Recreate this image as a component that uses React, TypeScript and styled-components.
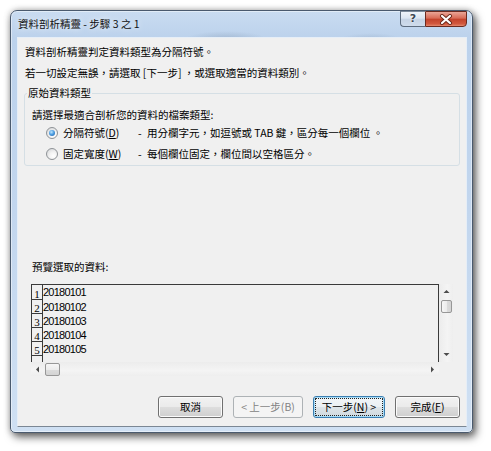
import React from 'react';
import styled, { createGlobalStyle, css } from 'styled-components';

const GlobalStyle = createGlobalStyle`
  html, body { margin: 0; padding: 0; background: #ffffff; }
  body { font-family: "Noto Sans CJK TC", "Noto Sans", sans-serif; color: #000; }
  * { box-sizing: border-box; }
`;

const UI_FONT = `"Noto Sans CJK TC", "Noto Sans", sans-serif`;

const Page = styled.div`
  width: 491px;
  height: 451px;
  padding: 10px 0 0 10px;
  overflow: hidden;
`;

const Frame = styled.div`
  width: 463px;
  height: 423px;
  border: 1px solid #4a5a6e;
  border-radius: 7px 7px 5px 5px;
  background:
    radial-gradient(ellipse 40px 8px at 215px 28px, rgba(120, 140, 165, 0.35), transparent),
    radial-gradient(ellipse 30px 6px at 360px 28px, rgba(120, 140, 165, 0.25), transparent),
    linear-gradient(180deg, #c9dcf1 0px, #bcd2ec 26px, #c2d6ee 200px, #cfe0f3 100%);
  box-shadow: 3px 4px 9px rgba(0, 0, 0, 0.6), 0 0 6px rgba(0, 0, 0, 0.25),
    inset 0 0 0 1px rgba(255, 255, 255, 0.45);
  display: flex;
  flex-direction: column;
`;

const TitleBar = styled.div`
  height: 26px;
  display: flex;
  align-items: flex-start;
  padding: 0 5px 0 7px;
`;

const TitleText = styled.div`
  flex: 1;
  font-family: ${UI_FONT};
  font-size: 10.5px;
  line-height: 14px;
  padding-top: 6px;
  color: #111;
  text-shadow: 0 0 6px rgba(255, 255, 255, 0.9);
  white-space: pre;
`;

const CaptionButton = styled.div<{ $kind: 'help' | 'close' }>`
  height: 16px;
  display: flex;
  align-items: center;
  justify-content: center;
  border: 1px solid #5d6c7e;
  border-top-color: #7d8b9b;
  ${(p) =>
    p.$kind === 'help'
      ? css`
          width: 25px;
          border-right: none;
          border-radius: 0 0 0 4px;
          background: linear-gradient(180deg, #eef3f9 0%, #dbe5f1 45%, #c5d3e4 50%, #cfdcec 100%);
        `
      : css`
          width: 42px;
          border-color: #6b2a1f;
          border-radius: 0 0 4px 0;
          background: linear-gradient(180deg, #e9a597 0%, #d86a55 45%, #c2422b 50%, #d2593f 85%, #e58a6f 100%);
        `}
`;

const HelpGlyph = styled.span`
  font-family: "DejaVu Sans", sans-serif;
  font-weight: bold;
  font-size: 11px;
  line-height: 12px;
  color: #3b4654;
  text-shadow: 0 0 2px #fff, 0 0 1px #fff;
`;

const Body = styled.div`
  flex: 1;
  padding: 0 5px 5px 6px;
  display: flex;
`;

const Client = styled.div`
  width: 450px;
  height: 390px;
  background: #f0f0f0;
  border: 1px solid #e6eef7;
  border-bottom-color: #7b8794;
  padding: 7px 6px 0 6px;
  display: flex;
  flex-direction: column;
  font-family: ${UI_FONT};
  font-size: 10.5px;
  line-height: 14px;
`;

const Intro = styled.p`
  margin: 0 0 0 1px;
  white-space: pre;
  & + & {
    margin-top: 7px;
  }
`;

const Group = styled.fieldset`
  margin: 6px 0 0;
  padding: 8px 0 4px 7px;
  border: 1px solid #d5dfe5;
  border-radius: 3px;
  min-width: 0;
  height: 80px;
`;

const Legend = styled.legend`
  margin-left: -5px;
  padding: 0 1px;
  font-size: 10.5px;
  line-height: 14px;
`;

const Prompt = styled.div`
  line-height: 14px;
`;

const RadioRow = styled.div<{ $gap: number }>`
  display: flex;
  align-items: center;
  height: 14px;
  margin: ${(p) => p.$gap}px 0 0 14px;
  white-space: pre;
`;

const Radio = styled.span<{ $checked?: boolean }>`
  position: relative;
  flex: none;
  width: 12px;
  height: 12px;
  margin-right: 5px;
  border-radius: 50%;
  border: 1px solid #8e9296;
  background: radial-gradient(circle at 65% 70%, #ffffff 0%, #f3f3f3 40%, #cfd1d3 100%);
  ${(p) =>
    p.$checked &&
    css`
      &::after {
        content: '';
        position: absolute;
        left: 2px;
        top: 2px;
        width: 6px;
        height: 6px;
        border-radius: 50%;
        background: radial-gradient(circle at 40% 35%, #bfe6ff 0%, #4f9fe2 45%, #1b5ba3 100%);
      }
    `}
`;

const RadioLabel = styled.span`
  width: 75px;
  flex: none;
`;

const Dash = styled.span`
  width: 9px;
  flex: none;
`;

const Key = styled.u`
  text-decoration: underline;
  text-underline-offset: 1px;
`;

const PreviewLabel = styled.div`
  margin: 94px 0 0 8px;
  line-height: 14px;
`;

const PreviewBox = styled.div`
  margin: 10px 7px 0 7px;
  height: 92px;
  display: grid;
  grid-template-columns: 1fr 14px;
  grid-template-rows: 1fr 14px;
`;

const List = styled.div`
  border: 1px solid #3a3a3a;
  border-bottom: none;
  overflow: hidden;
  display: flex;
  flex-direction: column;
`;

const Row = styled.div`
  display: flex;
  height: 14px;
  flex: none;
  &:first-child {
    height: 15px;
  }
`;

const RowNum = styled.div`
  width: 11px;
  flex: none;
  border-right: 1px solid #3a3a3a;
  border-bottom: 1px solid #3a3a3a;
  display: flex;
  align-items: flex-end;
  justify-content: center;
  font-family: "Liberation Serif", serif;
  font-size: 11px;
  line-height: 9px;
  color: #000;
`;

const RowData = styled.div`
  font-family: "Liberation Sans", Arial, sans-serif;
  font-size: 11px;
  letter-spacing: -0.75px;
  line-height: 14px;
  color: #000;
`;

const VScroll = styled.div`
  display: flex;
  flex-direction: column;
  background: linear-gradient(90deg, #ececec, #f4f4f4 60%, #eeeeee);
`;

const HScroll = styled.div`
  display: flex;
  align-items: stretch;
  background: linear-gradient(180deg, #ececec, #f4f4f4 60%, #eeeeee);
`;

const Corner = styled.div`
  background: #f0f0f0;
`;

const ArrowBtn = styled.div<{ $dir: 'v' | 'h' }>`
  flex: none;
  display: flex;
  align-items: center;
  justify-content: center;
  ${(p) => (p.$dir === 'v' ? 'height: 15px;' : 'width: 13px;')}
`;

const Track = styled.div`
  flex: 1;
`;

const Thumb = styled.div<{ $dir: 'v' | 'h' }>`
  flex: none;
  border: 1px solid #979797;
  border-radius: 2px;
  ${(p) =>
    p.$dir === 'v'
      ? css`
          height: 13px;
          margin: 1px 1px 0 2px;
          background: linear-gradient(90deg, #f6f6f6 0%, #ececec 50%, #dcdcdc 51%, #d4d4d4 100%);
        `
      : css`
          width: 15px;
          margin: 1px 0 0 1px;
          background: linear-gradient(180deg, #f6f6f6 0%, #ececec 50%, #dcdcdc 51%, #d4d4d4 100%);
        `}
`;

const ButtonRow = styled.div`
  margin-top: 20px;
  display: flex;
  justify-content: flex-end;
  gap: 10px;
`;

const Btn = styled.button<{ $w: number; $isDefault?: boolean }>`
  width: ${(p) => p.$w}px;
  height: 22px;
  padding: 0;
  font-family: ${UI_FONT};
  font-size: 10.5px;
  line-height: 14px;
  color: #000;
  border: 1px solid #707070;
  border-radius: 3px;
  background: linear-gradient(180deg, #f2f2f2 0%, #ebebeb 48%, #dddddd 52%, #cfcfcf 100%);
  box-shadow: inset 0 0 0 1px #fbfbfb;
  white-space: pre;
  &:disabled {
    color: #838383;
    border-color: #adb2b5;
    background: #f4f4f4;
    box-shadow: none;
  }
  ${(p) =>
    p.$isDefault &&
    css`
      border-color: #3c7fb1;
      box-shadow: inset 0 0 0 1px #a6dcf8;
      background: linear-gradient(180deg, #f2f6f9 0%, #ebf0f3 48%, #dde4e8 52%, #d0dae0 100%);
      outline: 1px dotted #222;
      outline-offset: -3px;
    `}
`;

const Tri = ({ dir }: { dir: 'up' | 'down' | 'left' | 'right' }) => {
  const pts: Record<string, string> = {
    up: '0.5,4 3.5,1 6.5,4',
    down: '0.5,1 3.5,4 6.5,1',
    left: '4,0.5 1,3.5 4,6.5',
    right: '1,0.5 4,3.5 1,6.5',
  };
  const vertical = dir === 'up' || dir === 'down';
  return (
    <svg width={vertical ? 7 : 5} height={vertical ? 5 : 7} viewBox={vertical ? '0 0 7 5' : '0 0 5 7'}>
      <polygon points={pts[dir]} fill="#4c4c4c" />
    </svg>
  );
};

const CloseX = () => (
  <svg width="14" height="11" viewBox="0 0 14 11">
    <path d="M3 2 L11 9 M11 2 L3 9" stroke="#6a2618" strokeWidth="4" strokeLinecap="round" fill="none" />
    <path d="M3 2 L11 9 M11 2 L3 9" stroke="#ffffff" strokeWidth="2.2" strokeLinecap="round" fill="none" />
  </svg>
);

const rows = ['20180101', '20180102', '20180103', '20180104', '20180105', ''];

export default function App() {
  return (
    <Page>
      <GlobalStyle />
      <Frame>
        <TitleBar>
          <TitleText>資料剖析精靈 - 步驟 3 之 1</TitleText>
          <CaptionButton $kind="help">
            <HelpGlyph>?</HelpGlyph>
          </CaptionButton>
          <CaptionButton $kind="close">
            <CloseX />
          </CaptionButton>
        </TitleBar>
        <Body>
          <Client>
            <Intro>資料剖析精靈判定資料類型為分隔符號。</Intro>
            <Intro>若一切設定無誤，請選取 [下一步] ，或選取適當的資料類別。</Intro>
            <Group>
              <Legend>原始資料類型</Legend>
              <Prompt>請選擇最適合剖析您的資料的檔案類型:</Prompt>
              <RadioRow $gap={4}>
                <Radio $checked />
                <RadioLabel>
                  分隔符號(<Key>D</Key>)
                </RadioLabel>
                <Dash>-</Dash>
                <span>用分欄字元，如逗號或 TAB 鍵，區分每一個欄位 。</span>
              </RadioRow>
              <RadioRow $gap={7}>
                <Radio />
                <RadioLabel>
                  固定寬度(<Key>W</Key>)
                </RadioLabel>
                <Dash>-</Dash>
                <span>每個欄位固定，欄位間以空格區分。</span>
              </RadioRow>
            </Group>
            <PreviewLabel>預覽選取的資料:</PreviewLabel>
            <PreviewBox>
              <List>
                {rows.map((r, i) => (
                  <Row key={i}>
                    <RowNum>{r ? i + 1 : ''}</RowNum>
                    <RowData>{r}</RowData>
                  </Row>
                ))}
              </List>
              <VScroll>
                <ArrowBtn $dir="v">
                  <Tri dir="up" />
                </ArrowBtn>
                <Thumb $dir="v" />
                <Track />
                <ArrowBtn $dir="v">
                  <Tri dir="down" />
                </ArrowBtn>
              </VScroll>
              <HScroll>
                <ArrowBtn $dir="h">
                  <Tri dir="left" />
                </ArrowBtn>
                <Thumb $dir="h" />
                <Track />
                <ArrowBtn $dir="h">
                  <Tri dir="right" />
                </ArrowBtn>
              </HScroll>
              <Corner />
            </PreviewBox>
            <ButtonRow>
              <Btn $w={65}>取消</Btn>
              <Btn $w={70} disabled>
                {'< 上一步(B)'}
              </Btn>
              <Btn $w={72} $isDefault>
                下一步(<Key>N</Key>) &gt;
              </Btn>
              <Btn $w={65}>
                完成(<Key>F</Key>)
              </Btn>
            </ButtonRow>
          </Client>
        </Body>
      </Frame>
    </Page>
  );
}
